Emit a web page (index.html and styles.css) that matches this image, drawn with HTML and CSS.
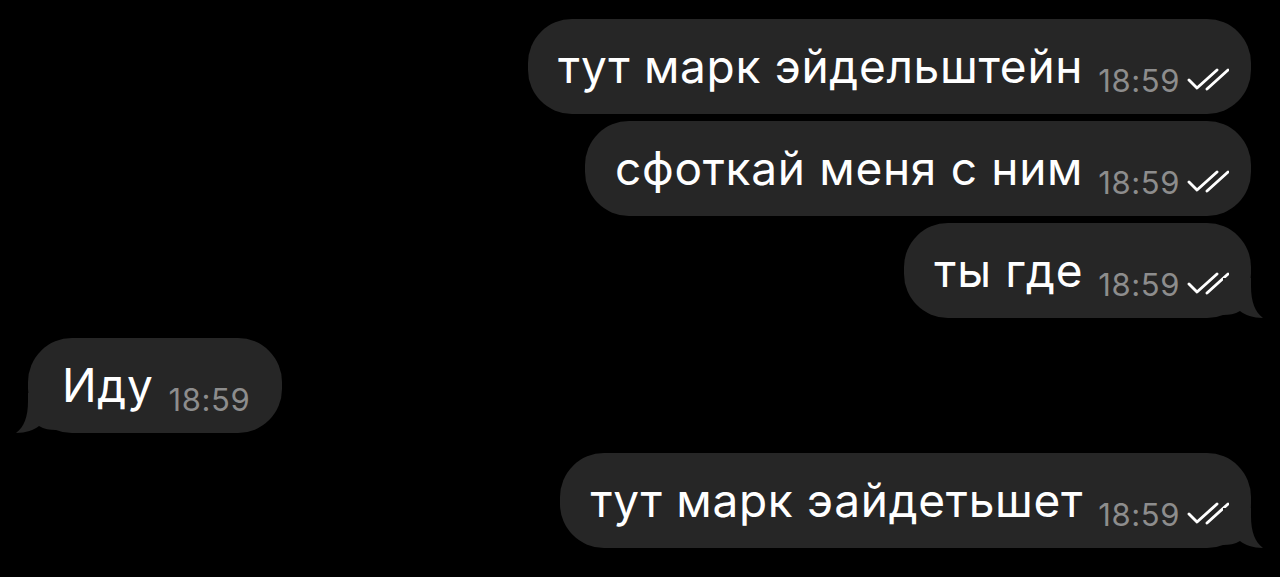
FILE: index.html
```html
<!DOCTYPE html>
<html lang="ru">
<head>
  <meta charset="UTF-8">
  <title>Чат</title>
  <link rel="stylesheet" href="styles.css">
</head>
<body>
  <main class="chat">
    <div class="row out">
      <div class="bubble">
        <span class="text">тут марк эйдельштейн</span>
        <span class="meta"><span class="time">18:59</span><svg class="checks" viewBox="0 0 42 24"><path d="M2 12 L10 20 L30 2 M20 21 L41 2"/></svg></span>
      </div>
    </div>
    <div class="row out">
      <div class="bubble">
        <span class="text">сфоткай меня с ним</span>
        <span class="meta"><span class="time">18:59</span><svg class="checks" viewBox="0 0 42 24"><path d="M2 12 L10 20 L30 2 M20 21 L41 2"/></svg></span>
      </div>
    </div>
    <div class="row out">
      <div class="bubble tailed">
        <span class="text">ты где</span>
        <span class="meta"><span class="time">18:59</span><svg class="checks" viewBox="0 0 42 24"><path d="M2 12 L10 20 L30 2 M20 21 L41 2"/></svg></span>
        <svg class="tail" viewBox="0 0 40 40"><path d="M0 0 H28 V8 C28 24 32 34 40 40 C30 40 22 37 17 33 C12 36 6 37 0 37 Z"/></svg>
      </div>
    </div>
    <div class="row in">
      <div class="bubble tailed">
        <span class="text">Иду</span>
        <span class="meta"><span class="time">18:59</span></span>
        <svg class="tail" viewBox="0 0 40 40"><path d="M40 0 H12 V8 C12 24 8 34 0 40 C10 40 18 37 23 33 C28 36 34 37 40 37 Z"/></svg>
      </div>
    </div>
    <div class="row out">
      <div class="bubble tailed">
        <span class="text">тут марк эайдетьшет</span>
        <span class="meta"><span class="time">18:59</span><svg class="checks" viewBox="0 0 42 24"><path d="M2 12 L10 20 L30 2 M20 21 L41 2"/></svg></span>
        <svg class="tail" viewBox="0 0 40 40"><path d="M0 0 H28 V8 C28 24 32 34 40 40 C30 40 22 37 17 33 C12 36 6 37 0 37 Z"/></svg>
      </div>
    </div>
  </main>
</body>
</html>
```

FILE: styles.css
```css
* {
  box-sizing: border-box;
}

html, body {
  margin: 0;
  height: 100%;
  background: #000;
}

body {
  font-family: Inter, "Noto Sans", sans-serif;
  color: #fff;
  overflow: hidden;
}

.chat {
  display: flex;
  flex-direction: column;
  padding: 19px 29px 0 28px;
}

.row {
  display: flex;
  margin-bottom: 7px;
}

.row.out {
  justify-content: flex-end;
}

.row.in {
  justify-content: flex-start;
  margin-top: 13px;
  margin-bottom: 20px;
}

.bubble {
  position: relative;
  display: flex;
  align-items: center;
  height: 95px;
  padding: 0 22px 0 30px;
  background: #262626;
  border-radius: 44px;
}

.row.in .bubble {
  padding: 0 32px 0 34px;
}

.text {
  font-size: 46px;
  line-height: 1;
  letter-spacing: 0.7px;
  padding-bottom: 2px;
}

.meta {
  display: flex;
  align-items: center;
  margin-left: 15px;
  margin-top: 28px;
}

.time {
  font-size: 31px;
  color: #8d8d8d;
  letter-spacing: 0.6px;
}

.checks {
  width: 42px;
  height: 24px;
  margin-left: 7px;
  margin-bottom: 1px;
  fill: none;
  stroke: #fff;
  stroke-width: 2.9;
  stroke-linecap: round;
  stroke-linejoin: round;
}

.tail {
  position: absolute;
  bottom: 0;
  width: 40px;
  height: 40px;
  fill: #262626;
}

.row.out .tail {
  right: -12px;
}

.row.in .tail {
  left: -12px;
}
```
